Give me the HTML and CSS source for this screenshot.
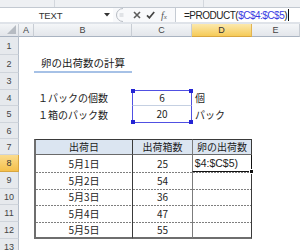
FILE: index.html
```html
<!DOCTYPE html>
<html lang="ja">
<head>
<meta charset="utf-8">
<title>卵の出荷数の計算</title>
<link rel="stylesheet" href="styles.css">
</head>
<body>
<div class="app">
  <div class="ribbon"><span class="rb-sep s1"></span><span class="rb-sep s2"></span></div>
  <div class="fbar">
    <div class="namebox">TEXT</div>
    <div class="nb-drop"><svg width="6" height="4" viewBox="0 0 6 4"><path d="M0 0H6L3 3.5Z" fill="#333"/></svg></div>
    <div class="grip"><svg width="12" height="14" viewBox="0 0 12 14"><path d="M8 0.5A6.5 6.5 0 0 0 8 13.5" stroke="#b7bcc3" fill="none"/><path d="M4.5 6H8.5M4.5 8H8.5" stroke="#c9cdd2"/></svg></div>
    <div class="fx-icons">
      <svg width="8" height="8" viewBox="0 0 8 8"><path d="M1 1L7 7M7 1L1 7" stroke="#5c5c5c" stroke-width="1.6"/></svg>
      <svg width="9" height="8" viewBox="0 0 9 8"><path d="M1 4.3L3.4 6.8L8.2 1" stroke="#444" stroke-width="1.7" fill="none"/></svg>
      <span class="ic-fx">f<span class="ic-sub">x</span></span>
    </div>
    <div class="formula">=PRODUCT(<span class="ref">$C$4:$C$5</span>)<span class="caret"></span></div>
  </div>
  <div class="gap"></div>
  <div class="sheet">
    <div class="corner"><span class="tri"></span></div>
    <div class="ch">A</div><div class="ch">B</div><div class="ch">C</div><div class="ch sel">D</div><div class="ch">E</div>

    <div class="rh">1</div><div class="c"></div><div class="c"></div><div class="c"></div><div class="c"></div><div class="c"></div>

    <div class="rh">2</div><div class="c"></div><div class="c title">卵の出荷数の計算</div><div class="c"></div><div class="c"></div><div class="c"></div>

    <div class="rh">3</div><div class="c"></div><div class="c"></div><div class="c"></div><div class="c"></div><div class="c"></div>

    <div class="rh">4</div><div class="c"></div><div class="c lbl">１パックの個数</div><div class="c num box-top"><span class="hdl tl"></span><span class="hdl tr"></span>6</div><div class="c unit">個</div><div class="c"></div>

    <div class="rh">5</div><div class="c"></div><div class="c lbl">１箱のパック数</div><div class="c num box-bot"><span class="hdl bl"></span><span class="hdl br"></span>20</div><div class="c unit">パック</div><div class="c"></div>

    <div class="rh">6</div><div class="c"></div><div class="c"></div><div class="c"></div><div class="c"></div><div class="c"></div>

    <div class="rh">7</div><div class="c"></div><div class="c num tb th">出荷日</div><div class="c num tc th">出荷箱数</div><div class="c num td th">卵の出荷数</div><div class="c"></div>

    <div class="rh sel">8</div><div class="c"></div><div class="c num tb">5月1日</div><div class="c num tc">25</div><div class="c td edit"><span class="edit-txt"><span class="edit-in">$4:$C$5)</span></span><span class="fillh"></span></div><div class="c"></div>

    <div class="rh">9</div><div class="c"></div><div class="c num tb dash">5月2日</div><div class="c num tc dash">54</div><div class="c td dash"></div><div class="c"></div>

    <div class="rh">10</div><div class="c"></div><div class="c num tb dash">5月3日</div><div class="c num tc dash">36</div><div class="c td dash"></div><div class="c"></div>

    <div class="rh">11</div><div class="c"></div><div class="c num tb dash">5月4日</div><div class="c num tc dash">47</div><div class="c td dash"></div><div class="c"></div>

    <div class="rh">12</div><div class="c"></div><div class="c num tb dash last">5月5日</div><div class="c num tc dash last">55</div><div class="c td dash last"></div><div class="c"></div>

    <div class="rh">13</div><div class="c"></div><div class="c"></div><div class="c"></div><div class="c"></div><div class="c"></div>
  </div>
</div>
</body>
</html>
```

FILE: styles.css
```css
* { box-sizing: border-box; margin: 0; padding: 0; }
html, body { width: 300px; height: 250px; overflow: hidden; background: #fff; }
body { font-family: "Noto Sans CJK JP", "Noto Sans", sans-serif; color: #1c1c1c; }

.app { width: 300px; height: 250px; overflow: hidden; }

/* ribbon remnant */
.ribbon { height: 7px; background: #eef0f3; display: flex; }
.rb-sep { width: 1px; background: #d3d7dd; }
.s1 { margin-left: 54px; }
.s2 { margin-left: 148px; }

/* formula bar */
.fbar { height: 15px; display: flex; border-top: 1px solid #c3c9d1; background: #f8f9fb; }
.namebox { width: 101px; background: #fff; display: flex; align-items: center; justify-content: center;
  font: 9.5px "Liberation Sans", sans-serif; letter-spacing: -0.2px; color: #333; }
.nb-drop { width: 12px; background: #fff; display: flex; align-items: center; justify-content: center; }
.grip { width: 14px; display: flex; align-items: center; justify-content: flex-end; }
.fx-icons { width: 48px; display: flex; align-items: center; padding-left: 6px; gap: 5px; }
.ic-fx { font: italic 10px "Liberation Serif", serif; color: #555; display: flex; align-items: flex-end; margin-left: 1px; }
.ic-sub { font-size: 7px; }
.formula { flex: 1; background: #fff; border-left: 1px solid #c5cbd3; padding-left: 8px;
  display: flex; align-items: center; white-space: nowrap;
  font: 10px "Liberation Sans", sans-serif; letter-spacing: -0.5px; color: #222; }
.ref { color: #3a3ae2; }
.caret { width: 1px; height: 12px; background: #111; margin-left: 1px; }

.gap { height: 2px; background: #dfe3e9; }

/* sheet grid */
.sheet { display: grid;
  grid-template-columns: 19px 15px 98px 60px 60px 1fr;
  grid-template-rows: 13px 18px 18px 17px 16px 17px 16px 16px 17px 17px 16px 17px 17px 16px; }

.corner { background: linear-gradient(#f3f5f7, #e2e5ea); border-right: 1px solid #c8cdd4; border-bottom: 1px solid #a9b3c1;
  display: flex; align-items: flex-end; justify-content: flex-end; padding: 0 2px 2px 0; }
.tri { width: 0; height: 0; border-left: 9px solid transparent; border-bottom: 9px solid #b6bbc2; }

.ch { font: 9px "Liberation Sans", sans-serif; color: #444; display: flex; align-items: center; justify-content: center;
  background: linear-gradient(#f4f6f8, #e3e6eb); border-right: 1px solid #c8cdd4; border-bottom: 1px solid #a9b3c1; }
.ch.sel { background: linear-gradient(#fce9ad, #f6cb58); border-right-color: #e2b451; border-bottom-color: #d8a640; color: #333; }

.rh { font: 9px "Liberation Sans", sans-serif; color: #444; display: flex; align-items: center; justify-content: center;
  background: #e6e9ed; border-right: 1px solid #b6bfcb; border-bottom: 1px solid #cfd4db; }
.rh.sel { background: linear-gradient(#fbdc8e, #f5c04c); border-bottom-color: #d8a640; border-right-color: #d8a640; color: #333; }

.c { background: #fff; font-size: 10px; line-height: 1; display: flex; align-items: center; white-space: nowrap; }
.num { justify-content: center; }

.title { justify-content: center; font-size: 10.5px; border-bottom: 2px solid #a6c1e6; color: #1a1a1a; }
.lbl { padding-left: 4px; }
.unit { padding-left: 3px; }

/* range finder around C4:C5 */
.box-top { position: relative; border: 1px solid #5050e2; border-bottom: 1px solid #c5d0e2; }
.box-bot { position: relative; border: 1px solid #5050e2; border-top: none; }
.hdl { position: absolute; width: 4px; height: 4px; background: #2424d4; }
.hdl.tl { left: -2px; top: -2px; }
.hdl.tr { right: -2px; top: -2px; }
.hdl.bl { left: -2px; bottom: -2px; }
.hdl.br { right: -2px; bottom: -2px; }

/* data table B7:D12 */
.tb { border-left: 2px solid #6e6e6e; }
.tc { border-left: 1px solid #3a3a3a; }
.td { border-left: 1px solid #7c7c7c; border-right: 1px solid #3a3a3a; }
.th { background: #dbe5f1; border-top: 1px solid #3a3a3a; border-bottom: 1px solid #6a6a6a; }
.dash { background: repeating-linear-gradient(to right, #7f7f7f 0 2px, transparent 2px 3px) top / 100% 1px no-repeat, #fff; }
.last { border-bottom: 2px solid #6e6e6e; }

.edit { position: relative; border-right: 1px solid #111; border-bottom: 1px solid #111; padding-right: 13px; }
.edit-txt { flex: 1; min-width: 0; display: flex; justify-content: flex-end; overflow: hidden; }
.edit-in { font: 10.5px "Liberation Sans", sans-serif; color: #222; margin-left: -2px; }
.fillh { position: absolute; right: -3px; bottom: -3px; width: 5px; height: 5px; background: #111; border: 1px solid #fff; }
```
